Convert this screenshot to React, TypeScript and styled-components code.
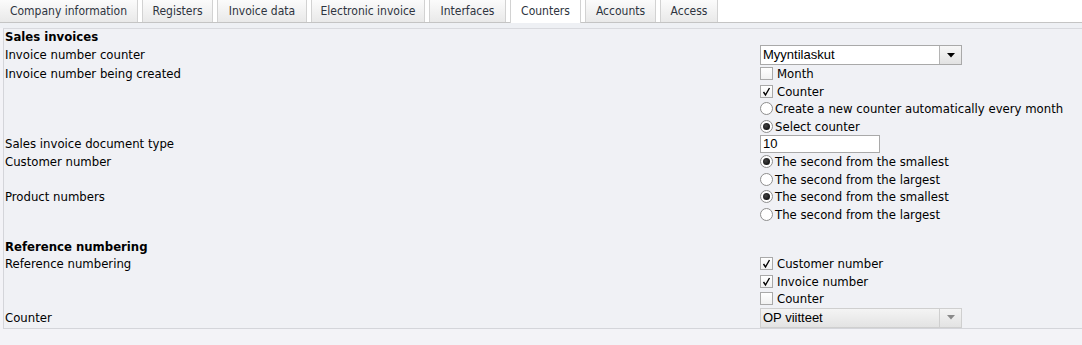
import React from "react";
import styled, { createGlobalStyle } from "styled-components";

const GlobalStyle = createGlobalStyle`
  html, body {
    margin: 0;
    padding: 0;
    background: #f3f3f7;
    font-family: "DejaVu Sans Condensed", "DejaVu Sans", "Liberation Sans", sans-serif;
    font-size: 13px;
    color: #000;
  }
`;

const TabBar = styled.div`
  display: flex;
  gap: 4px;
  height: 22px;
  background: #fff;
  border-bottom: 1px solid #c4c4c4;
`;

const Tab = styled.div<{ $w: number; $active?: boolean }>`
  width: ${(p) => p.$w}px;
  height: ${(p) => (p.$active ? 23 : 22)}px;
  box-sizing: border-box;
  display: flex;
  align-items: center;
  justify-content: center;
  padding-bottom: ${(p) => (p.$active ? 1 : 0)}px;
  border-left: 1px solid #d2d2d2;
  border-right: 1px solid #d2d2d2;
  background: ${(p) =>
    p.$active ? "#ffffff" : "linear-gradient(#fbfbfb, #e9e9e9)"};
  color: #2e3440;
  font-size: 12px;
  white-space: nowrap;
  &:first-child {
    border-left: none;
  }
`;

const Band = styled.div`
  height: 5px;
  background: #eef0f4;
`;

const Panel = styled.div`
  margin-left: 3px;
  background: #f0f1f5;
  border-top: 1px solid #d8d9de;
  border-left: 1px solid #d4d5da;
  border-bottom: 1px solid #d4d5da;
`;

const FormGrid = styled.div`
  display: grid;
  grid-template-columns: 756px 1fr;
`;

const Heading = styled.div<{ $gap?: number }>`
  grid-column: 1 / -1;
  height: 16px;
  line-height: 16px;
  padding-left: 1px;
  margin-top: ${(p) => p.$gap ?? 0}px;
  font-weight: bold;
  font-size: 13px;
`;

const Label = styled.div<{ $h?: number }>`
  padding-left: 1px;
  line-height: ${(p) => p.$h ?? 17.5}px;
  white-space: nowrap;
`;

const Controls = styled.div`
  display: flex;
  flex-direction: column;
`;

const OptionRow = styled.label`
  display: flex;
  align-items: center;
  height: 17.5px;
  white-space: nowrap;
`;

const Box = styled.span`
  width: 13px;
  height: 13px;
  box-sizing: border-box;
  border: 1px solid #a9a9a9;
  background: linear-gradient(#ffffff, #f1f1f1);
  margin-right: 4px;
  display: flex;
  align-items: center;
  justify-content: center;
`;

const Circle = styled.span`
  width: 13px;
  height: 13px;
  box-sizing: border-box;
  border: 1px solid #8e8e8e;
  border-radius: 50%;
  background: #fff;
  margin-right: 2px;
  display: flex;
  align-items: center;
  justify-content: center;
`;

const Dot = styled.span`
  width: 7px;
  height: 7px;
  border-radius: 50%;
  background: radial-gradient(circle at 40% 40%, #444, #000);
`;

const SelectBox = styled.div<{ $disabled?: boolean }>`
  width: 202px;
  height: 20px;
  box-sizing: border-box;
  border: 1px solid ${(p) => (p.$disabled ? "#cfcfcf" : "#a9a9a9")};
  background: ${(p) =>
    p.$disabled ? "linear-gradient(#f4f4f4, #e3e3e3)" : "#ffffff"};
  display: flex;
  font-family: "Liberation Sans", Arial, sans-serif;
  font-size: 13px;
`;

const SelectValue = styled.div`
  flex: 1;
  padding-left: 2px;
  line-height: 18px;
  color: #000;
`;

const SelectButton = styled.div<{ $disabled?: boolean }>`
  width: 21px;
  border-left: 1px solid ${(p) => (p.$disabled ? "#cfcfcf" : "#b4b4b4")};
  background: ${(p) =>
    p.$disabled ? "transparent" : "linear-gradient(#f7f7f7, #e2e2e2)"};
  display: flex;
  align-items: center;
  justify-content: center;
`;

const TextInput = styled.div`
  width: 120px;
  height: 18px;
  box-sizing: border-box;
  border: 1px solid #a9a9a9;
  background: #fff;
  padding-left: 2px;
  line-height: 16px;
  font-family: "Liberation Sans", Arial, sans-serif;
  font-size: 13px;
`;

const FieldRow = styled.div<{ $h: number }>`
  height: ${(p) => p.$h}px;
  display: flex;
  align-items: center;
`;

const tabs = [
  { name: "Company information", w: 138 },
  { name: "Registers", w: 71 },
  { name: "Invoice data", w: 90 },
  { name: "Electronic invoice", w: 114 },
  { name: "Interfaces", w: 77 },
  { name: "Counters", w: 71, active: true },
  { name: "Accounts", w: 71 },
  { name: "Access", w: 58 },
];

function Checkbox({ checked, label }: { checked?: boolean; label: string }) {
  return (
    <OptionRow>
      <Box>
        {checked && (
          <svg width="11" height="11" viewBox="0 0 11 11">
            <path d="M2.5 6 L4.5 9 L8.5 2" fill="none" stroke="#000" strokeWidth="1.4" />
          </svg>
        )}
      </Box>
      {label}
    </OptionRow>
  );
}

function Radio({ checked, label }: { checked?: boolean; label: string }) {
  return (
    <OptionRow>
      <Circle>{checked && <Dot />}</Circle>
      {label}
    </OptionRow>
  );
}

function Select({ value, disabled }: { value: string; disabled?: boolean }) {
  return (
    <FieldRow $h={20}>
      <SelectBox $disabled={disabled}>
        <SelectValue>{value}</SelectValue>
        <SelectButton $disabled={disabled}>
          <svg width="8" height="5" viewBox="0 0 8 5">
            <path d="M0 0 H8 L4 4.5 Z" fill={disabled ? "#8a8a8a" : "#000"} />
          </svg>
        </SelectButton>
      </SelectBox>
    </FieldRow>
  );
}

export default function App() {
  return (
    <>
      <GlobalStyle />
      <TabBar>
        {tabs.map((t) => (
          <Tab key={t.name} $w={t.w} $active={t.active}>
            {t.name}
          </Tab>
        ))}
      </TabBar>
      <Band />
      <Panel>
        <FormGrid>
          <Heading>Sales invoices</Heading>

          <Label $h={20}>Invoice number counter</Label>
          <Select value="Myyntilaskut" />

          <Label>Invoice number being created</Label>
          <Controls>
            <Checkbox label="Month" />
            <Checkbox checked label="Counter" />
            <Radio label="Create a new counter automatically every month" />
            <Radio checked label="Select counter" />
          </Controls>

          <Label $h={18}>Sales invoice document type</Label>
          <FieldRow $h={18}>
            <TextInput>10</TextInput>
          </FieldRow>

          <Label>Customer number</Label>
          <Controls>
            <Radio checked label="The second from the smallest" />
            <Radio label="The second from the largest" />
          </Controls>

          <Label>Product numbers</Label>
          <Controls>
            <Radio checked label="The second from the smallest" />
            <Radio label="The second from the largest" />
          </Controls>

          <Heading $gap={16}>Reference numbering</Heading>

          <Label>Reference numbering</Label>
          <Controls>
            <Checkbox checked label="Customer number" />
            <Checkbox checked label="Invoice number" />
            <Checkbox label="Counter" />
          </Controls>

          <Label $h={20}>Counter</Label>
          <Select value="OP viitteet" disabled />
        </FormGrid>
      </Panel>
    </>
  );
}
